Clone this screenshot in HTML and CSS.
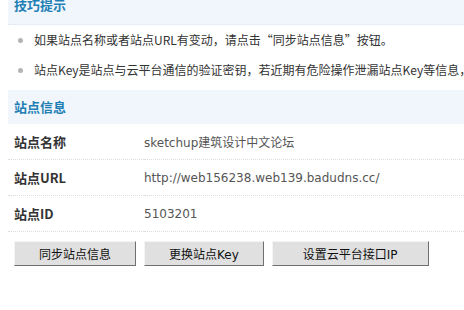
FILE: index.html
```html
<!DOCTYPE html>
<html lang="zh-CN">
<head>
    <meta charset="UTF-8">
    <title>站点信息</title>
    <link rel="stylesheet" href="styles.css">
</head>
<body>
    <div class="panel">
        <h3 class="panel-title tips-title">技巧提示</h3>
        <ul class="tips">
            <li>如果站点名称或者站点URL有变动，请点击“同步站点信息”按钮。</li>
            <li>站点Key是站点与云平台通信的验证密钥，若近期有危险操作泄漏站点Key等信息，请点击“更换站点Key”按钮。</li>
        </ul>

        <h3 class="panel-title">站点信息</h3>
        <table class="info">
            <tr>
                <th>站点名称</th>
                <td>sketchup建筑设计中文论坛</td>
            </tr>
            <tr>
                <th>站点URL</th>
                <td>http://web156238.web139.badudns.cc/</td>
            </tr>
            <tr>
                <th>站点ID</th>
                <td>5103201</td>
            </tr>
        </table>

        <div class="actions">
            <button type="button" class="btn">同步站点信息</button>
            <button type="button" class="btn">更换站点Key</button>
            <button type="button" class="btn btn-wide">设置云平台接口IP</button>
        </div>
    </div>
</body>
</html>
```

FILE: styles.css
```css
/* Base */
html, body {
    overflow: hidden;
}

body {
    margin: 0;
    background: #fff;
    font-family: "DejaVu Sans", "Noto Sans CJK SC", sans-serif;
    font-size: 12px;
    color: #333;
}

.panel {
    width: 720px;
    margin-left: 8px;
}

/* Section titles */
.panel-title {
    margin: 0;
    padding-left: 6px;
    height: 34px;
    line-height: 34px;
    background-color: #f0f6fc;
    color: #1e80b4;
    font-family: "Noto Sans CJK SC", sans-serif;
    font-size: 13px;
    font-weight: bold;
}

.tips-title {
    height: 20px;
    line-height: 20px;
    margin-top: -5px;
    padding-bottom: 9px;
    border-bottom: 1px dotted #dfe6ee;
}

/* Tips list */
.tips {
    list-style: none;
    margin: 0;
    padding: 0 0 5px 0;
}

.tips li {
    position: relative;
    height: 30px;
    line-height: 30px;
    padding-left: 26px;
    font-family: "Noto Sans CJK SC", sans-serif;
    color: #333;
    white-space: nowrap;
}

.tips li::before {
    content: "";
    position: absolute;
    left: 10px;
    top: 13px;
    width: 5px;
    height: 5px;
    border-radius: 50%;
    background-color: #b4b4b4;
}

/* Info table */
.info {
    width: 100%;
    border-collapse: collapse;
}

.info th,
.info td {
    height: 35px;
    padding: 0;
    border-bottom: 1px dotted #dcdcdc;
    text-align: left;
    white-space: nowrap;
}

.info th {
    width: 130px;
    padding-left: 6px;
    font-family: "Noto Sans CJK SC", sans-serif;
    font-size: 13px;
    font-weight: bold;
    color: #333;
}

.info td {
    color: #555;
}

/* Buttons */
.actions {
    display: flex;
    gap: 8px;
    padding: 9px 0 0 6px;
}

.btn {
    height: 25px;
    padding: 0 24px;
    background-color: #e0e0e0;
    border: 1px solid;
    border-color: #f4f4f4 #6f6f6f #6f6f6f #f4f4f4;
    font-family: "DejaVu Sans", "Noto Sans CJK SC", sans-serif;
    font-size: 12px;
    color: #111;
    cursor: pointer;
}

.btn-wide {
    padding: 0 30px;
}
```
